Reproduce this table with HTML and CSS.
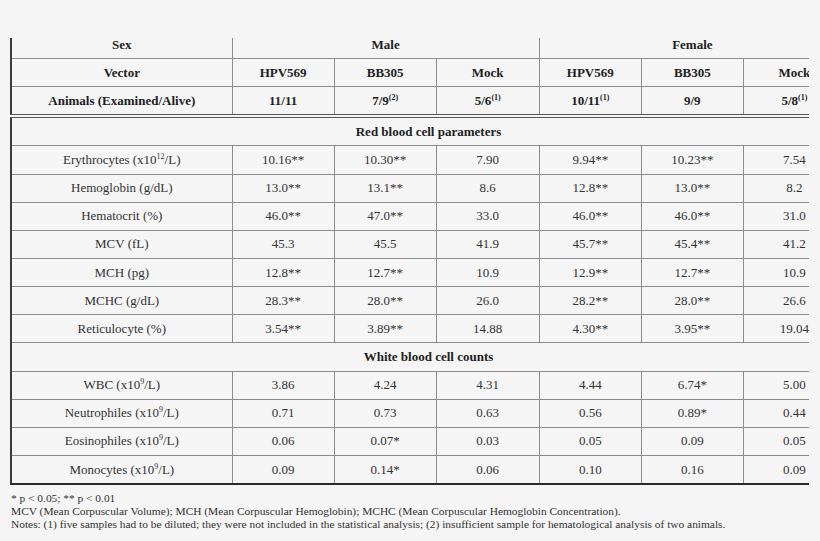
FILE: index.html
```html
<!DOCTYPE html>
<html>
<head>
<meta charset="utf-8">
<link rel="stylesheet" href="styles.css">
</head>
<body>
<div class="clip">
<table class="tbl">
  <colgroup>
    <col class="c-label">
    <col class="c-val"><col class="c-val"><col class="c-val3">
    <col class="c-val"><col class="c-val"><col class="c-val">
  </colgroup>
  <tbody>
    <tr class="hd top">
      <td>Sex</td>
      <td colspan="3">Male</td>
      <td colspan="3">Female</td>
    </tr>
    <tr class="hd">
      <td>Vector</td>
      <td>HPV569</td><td>BB305</td><td>Mock</td>
      <td>HPV569</td><td>BB305</td><td>Mock</td>
    </tr>
    <tr class="hd last-hd">
      <td>Animals (Examined/Alive)</td>
      <td>11/11</td><td>7/9<sup>(2)</sup></td><td>5/6<sup>(1)</sup></td>
      <td>10/11<sup>(1)</sup></td><td>9/9</td><td>5/8<sup>(1)</sup></td>
    </tr>
    <tr class="sec"><td colspan="7">Red blood cell parameters</td></tr>
    <tr><td>Erythrocytes (x10<sup>12</sup>/L)</td><td>10.16**</td><td>10.30**</td><td>7.90</td><td>9.94**</td><td>10.23**</td><td>7.54</td></tr>
    <tr><td>Hemoglobin (g/dL)</td><td>13.0**</td><td>13.1**</td><td>8.6</td><td>12.8**</td><td>13.0**</td><td>8.2</td></tr>
    <tr><td>Hematocrit (%)</td><td>46.0**</td><td>47.0**</td><td>33.0</td><td>46.0**</td><td>46.0**</td><td>31.0</td></tr>
    <tr><td>MCV (fL)</td><td>45.3</td><td>45.5</td><td>41.9</td><td>45.7**</td><td>45.4**</td><td>41.2</td></tr>
    <tr><td>MCH (pg)</td><td>12.8**</td><td>12.7**</td><td>10.9</td><td>12.9**</td><td>12.7**</td><td>10.9</td></tr>
    <tr><td>MCHC (g/dL)</td><td>28.3**</td><td>28.0**</td><td>26.0</td><td>28.2**</td><td>28.0**</td><td>26.6</td></tr>
    <tr><td>Reticulocyte (%)</td><td>3.54**</td><td>3.89**</td><td>14.88</td><td>4.30**</td><td>3.95**</td><td>19.04</td></tr>
    <tr class="sec"><td colspan="7">White blood cell counts</td></tr>
    <tr><td>WBC (x10<sup>9</sup>/L)</td><td>3.86</td><td>4.24</td><td>4.31</td><td>4.44</td><td>6.74*</td><td>5.00</td></tr>
    <tr><td>Neutrophiles (x10<sup>9</sup>/L)</td><td>0.71</td><td>0.73</td><td>0.63</td><td>0.56</td><td>0.89*</td><td>0.44</td></tr>
    <tr><td>Eosinophiles (x10<sup>9</sup>/L)</td><td>0.06</td><td>0.07*</td><td>0.03</td><td>0.05</td><td>0.09</td><td>0.05</td></tr>
    <tr class="lastrow"><td>Monocytes (x10<sup>9</sup>/L)</td><td>0.09</td><td>0.14*</td><td>0.06</td><td>0.10</td><td>0.16</td><td>0.09</td></tr>
  </tbody>
</table>
</div>
<div class="notes">
  <p>* p &lt; 0.05; ** p &lt; 0.01</p>
  <p>MCV (Mean Corpuscular Volume); MCH (Mean Corpuscular Hemoglobin); MCHC (Mean Corpuscular Hemoglobin Concentration).</p>
  <p>Notes: (1) five samples had to be diluted; they were not included in the statistical analysis; (2) insufficient sample for hematological analysis of two animals.</p>
</div>
</body>
</html>
```

FILE: styles.css
```css
html, body {
  margin: 0;
  padding: 0;
  background: #f5f5f5;
}

body {
  font-family: "Liberation Serif", "Times New Roman", serif;
  color: #222;
  width: 820px;
  height: 541px;
  overflow: hidden;
}

.clip {
  margin-top: 38px;
  width: 809px;
  overflow: hidden;
}

.tbl {
  margin-left: 10px;
  border-collapse: collapse;
  table-layout: fixed;
  width: 836px;
  font-size: 13px;
  border-left: 2px solid #3a3a3a;
  border-bottom: 2px solid #2a2a2a;
}

.c-label { width: 221px; }
.c-val { width: 102px; }
.c-val3 { width: 103px; }

.tbl td {
  height: 27.15px;
  padding: 0;
  text-align: center;
  vertical-align: middle;
  border: 1px solid #8c8c8c;
  line-height: 14px;
  color: #333;
}

.tbl .top td {
  border-top: none;
  height: 20px;
  line-height: 14px;
  vertical-align: top;
}

.tbl .hd td {
  font-weight: bold;
  color: #222;
}

.tbl .last-hd td {
  border-bottom: 4px double #555;
}

.tbl .sec td {
  font-weight: bold;
  color: #222;
}

.tbl .lastrow td {
  border-bottom: 2px solid #2a2a2a;
}

.tbl td:first-child {
  border-left: 2px solid #3a3a3a;
}

.tbl sup {
  font-size: 8px;
  line-height: 0;
  vertical-align: 5px;
}

.notes {
  margin-top: 7px;
  padding-left: 11px;
  font-size: 11.4px;
  line-height: 13px;
  color: #333;
}

.notes p {
  margin: 0;
  white-space: nowrap;
}
```
